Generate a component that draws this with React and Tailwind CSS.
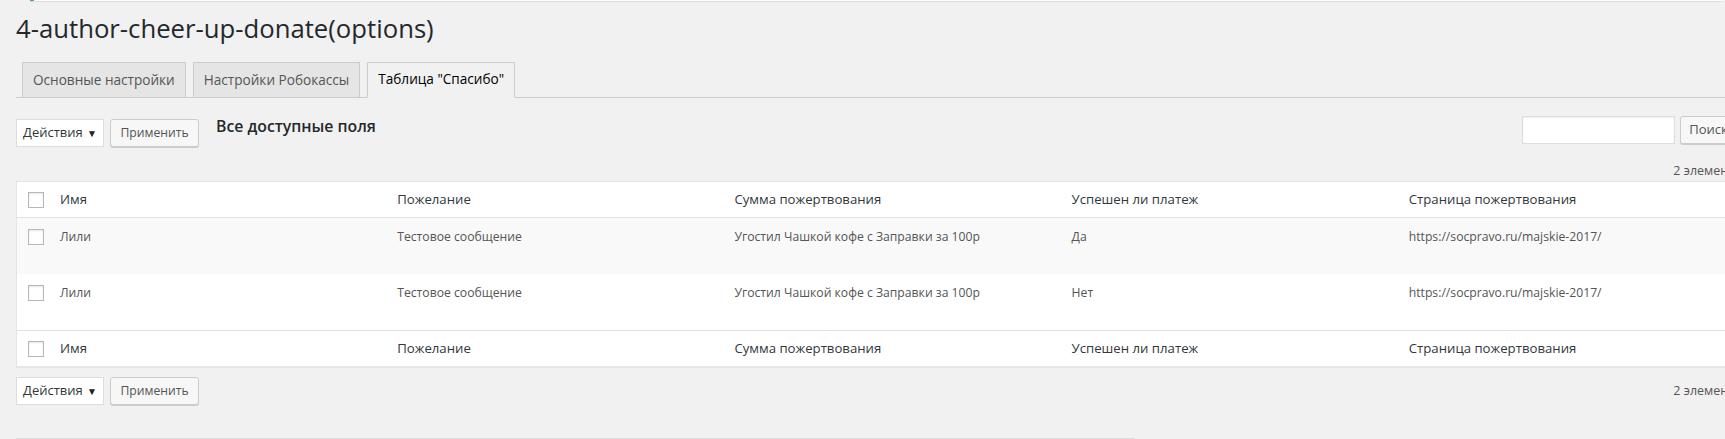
import React from 'react';

// "Thank you" table page of the donate plugin settings
const tabs = [
    { label: 'Основные настройки', active: false },
    { label: 'Настройки Робокассы', active: false },
    { label: 'Таблица "Спасибо"', active: true },
];

const columns = ['Имя', 'Пожелание', 'Сумма пожертвования', 'Успешен ли платеж', 'Страница пожертвования'];

const rows = [
    { name: 'Лили', wish: 'Тестовое сообщение', sum: 'Угостил Чашкой кофе с Заправки за 100р', ok: 'Да', page: 'https://socpravo.ru/majskie-2017/' },
    { name: 'Лили', wish: 'Тестовое сообщение', sum: 'Угостил Чашкой кофе с Заправки за 100р', ok: 'Нет', page: 'https://socpravo.ru/majskie-2017/' },
];

const Checkbox = () => (
    <span className="block w-4 h-4 bg-white border border-[#b4b9be] shadow-[inset_0_1px_2px_rgba(0,0,0,0.1)]" />
);

const BulkActions = () => (
    <div className="flex items-center gap-[6px]">
        <div className="flex items-center justify-between w-[88px] h-[28px] pl-[6px] pr-[6px] bg-white border border-[#ddd] text-[13px] text-[#32373c]">
            <span>Действия</span>
            <span className="text-[10px] text-[#222]">▼</span>
        </div>
        <button className="w-[89px] h-[28px] rounded-[3px] bg-[#f7f7f7] border border-[#ccc] shadow-[0_1px_0_#ccc] text-[12.2px] text-[#555]">
            Применить
        </button>
    </div>
);

// header and footer share the same cells, only the divider side differs
const HeaderRow = ({ divider }) => (
    <tr className="h-[36px]">
        <td className={`w-[33px] pl-[11px] align-middle ${divider}`}>
            <Checkbox />
        </td>
        {columns.map((col) => (
            <td key={col} className={`px-[10px] align-middle text-[13.2px] text-[#32373c] ${divider}`}>
                {col}
            </td>
        ))}
    </tr>
);

export default function App() {
    return (
        <div className="h-[439px] w-full overflow-hidden bg-[#f1f1f1] font-['Open_Sans',sans-serif] text-[#444]">
            {/* top strip */}
            <div className="flex ml-[30px] mr-[3px] h-[2px] bg-white border-b border-[#ddd]">
                <span className="w-[4px] h-[1px] bg-[#46b450]" />
            </div>

            <div className="w-[1757px] pl-[16px] pr-[20px]">
                <h1 className="mt-[12px] text-[25.7px] leading-[30px] text-[#23282d]">
                    4-author-cheer-up-donate(options)
                </h1>

                {/* tabs */}
                <div className="flex items-end gap-[7px] mt-[18px] pl-[6px] border-b border-[#ccc]">
                    {tabs.map((tab) => (
                        <div
                            key={tab.label}
                            className={`flex items-center h-[35px] px-[10px] border border-[#ccc] text-[13.6px] ${
                                tab.active
                                    ? '-mb-px h-[36px] bg-[#f1f1f1] border-b-[#f1f1f1] text-black pb-px'
                                    : 'border-b-0 bg-[#e5e5e5] text-[#555]'
                            }`}
                        >
                            {tab.label}
                        </div>
                    ))}
                </div>

                {/* top tablenav */}
                <div className="flex items-start mt-[17px]">
                    <div className="mt-[4px]">
                        <BulkActions />
                    </div>
                    <h2 className="ml-[17px] text-[15.8px] leading-[22px] font-semibold text-[#23282d]">
                        Все доступные поля
                    </h2>
                    <div className="ml-auto mt-px flex items-center gap-[5px]">
                        <div className="w-[153px] h-[28px] bg-white border border-[#ddd] shadow-[inset_0_1px_2px_rgba(0,0,0,0.07)]" />
                        <button className="w-[57px] h-[28px] rounded-[3px] bg-[#f7f7f7] border border-[#ccc] shadow-[0_1px_0_#ccc] text-[13px] text-[#555]">
                            Поиск
                        </button>
                    </div>
                </div>
                <div className="flex justify-end -mr-[4px] mt-[14px] h-[20px] items-center text-[12.5px] text-[#555]">
                    2 элемента
                </div>

                {/* list table */}
                <table className="w-full table-fixed border-separate border-spacing-0 bg-white border border-[#e5e5e5] shadow-[0_1px_1px_rgba(0,0,0,0.04)]">
                    <colgroup>
                        <col className="w-[33px]" />
                        {columns.map((col) => (
                            <col key={col} />
                        ))}
                    </colgroup>
                    <thead>
                        <HeaderRow divider="border-b border-[#e1e1e1]" />
                    </thead>
                    <tbody>
                        {rows.map((row, i) => (
                            <tr key={i} className={`h-[56px] ${i % 2 === 0 ? 'bg-[#f9f9f9]' : 'bg-white'}`}>
                                <td className="pl-[11px] pt-[11px] align-top">
                                    <Checkbox />
                                </td>
                                {[row.name, row.wish, row.sum, row.ok, row.page].map((val, j) => (
                                    <td key={j} className="px-[10px] pt-[9px] align-top text-[12.2px] leading-[19px] text-[#555]">
                                        {val}
                                    </td>
                                ))}
                            </tr>
                        ))}
                    </tbody>
                    <tfoot>
                        <HeaderRow divider="border-t border-[#e1e1e1]" />
                    </tfoot>
                </table>

                {/* bottom tablenav */}
                <div className="flex items-center mt-[10px] h-[28px]">
                    <BulkActions />
                    <span className="ml-auto -mr-[4px] text-[12.5px] text-[#555]">2 элемента</span>
                </div>

                <div className="mt-[33px] w-[1118px] h-px bg-[#dcdcdc]" />
            </div>
        </div>
    );
}
